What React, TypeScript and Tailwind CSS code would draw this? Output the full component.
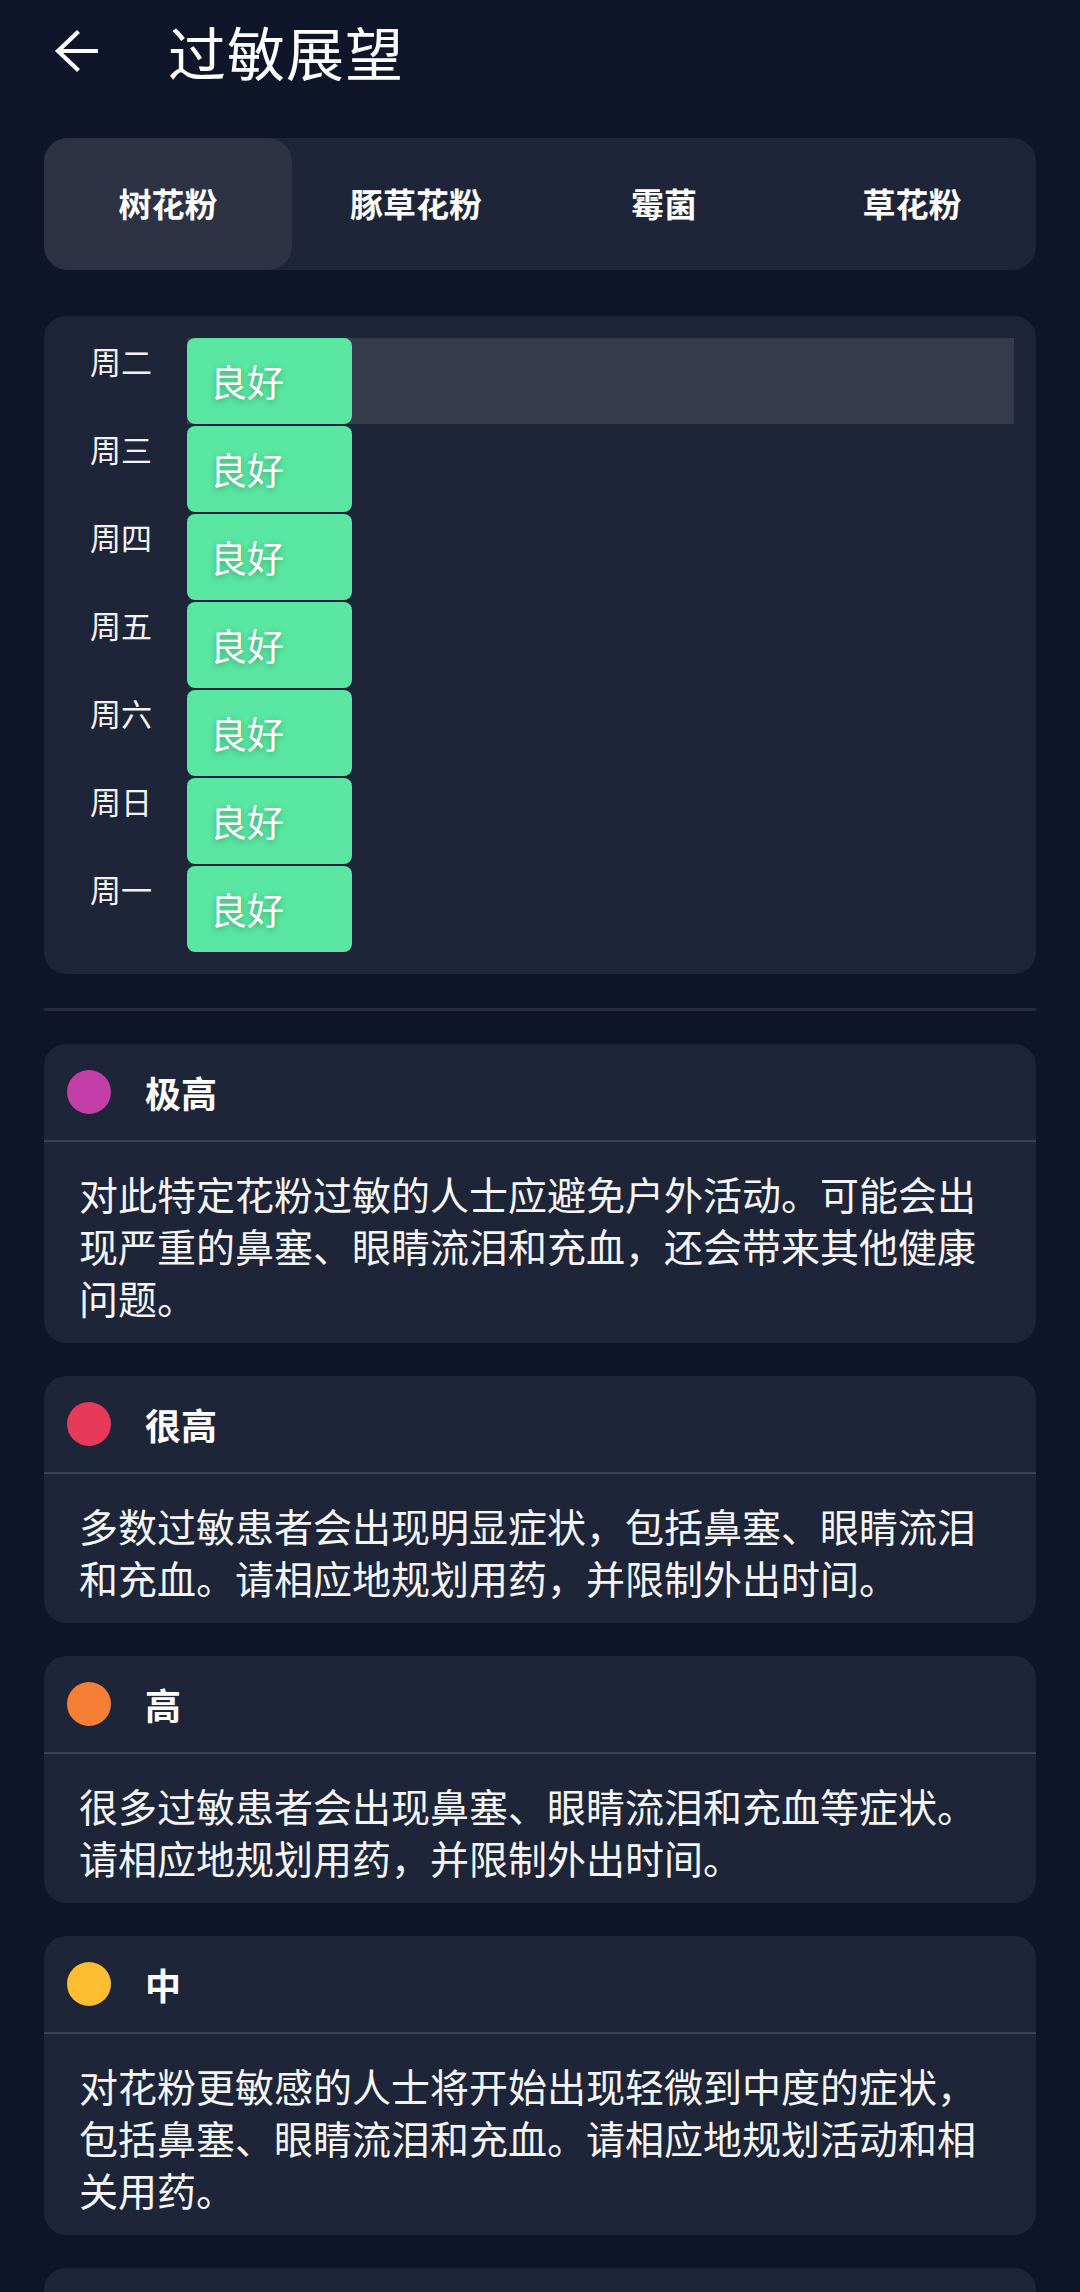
import React, { useState } from 'react';

const TABS = ['树花粉', '豚草花粉', '霉菌', '草花粉'];

const DAYS = ['周二', '周三', '周四', '周五', '周六', '周日', '周一'];

const LEVELS = [
  {
    name: '极高',
    dot: 'bg-[#c43ea9]',
    text: '对此特定花粉过敏的人士应避免户外活动。可能会出现严重的鼻塞、眼睛流泪和充血，还会带来其他健康问题。',
  },
  {
    name: '很高',
    dot: 'bg-[#e9395a]',
    text: '多数过敏患者会出现明显症状，包括鼻塞、眼睛流泪和充血。请相应地规划用药，并限制外出时间。',
  },
  {
    name: '高',
    dot: 'bg-[#f47f35]',
    text: '很多过敏患者会出现鼻塞、眼睛流泪和充血等症状。请相应地规划用药，并限制外出时间。',
  },
  {
    name: '中',
    dot: 'bg-[#fcbd30]',
    text: '对花粉更敏感的人士将开始出现轻微到中度的症状，包括鼻塞、眼睛流泪和充血。请相应地规划活动和相关用药。',
  },
];

function BackArrow() {
  return (
    <svg width="46" height="44" viewBox="0 0 46 44" fill="none" stroke="white" strokeWidth="4.2" strokeLinecap="butt">
      <path d="M44 22H4" />
      <path d="M24.5 2.5L4 22l20.5 19.5" />
    </svg>
  );
}

export default function App() {
  const [tab, setTab] = useState(0);
  const [day, setDay] = useState(0);

  return (
    <div
      className="w-[1080px] h-[2292px] overflow-hidden bg-[#10162a] text-white"
      style={{ fontFamily: '"Noto Sans CJK SC", "Noto Sans", sans-serif' }}
    >
      {/* header */}
      <div className="h-[102px] flex items-center pl-[54px]">
        <BackArrow />
        <h1 className="ml-[68px] text-[58px] leading-none font-normal tracking-[1px]">过敏展望</h1>
      </div>

      <div className="px-[44px]">
        {/* tabs */}
        <div className="mt-[36px] h-[132px] rounded-[24px] bg-[#1f2538] grid grid-cols-4">
          {TABS.map((t, i) => (
            <button
              key={t}
              onClick={() => setTab(i)}
              className={`h-full rounded-[24px] text-[33px] font-semibold flex items-center justify-center ${
                tab === i ? 'bg-[#2d3244]' : ''
              }`}
            >
              {t}
            </button>
          ))}
        </div>

        {/* forecast chart */}
        <div className="mt-[46px] rounded-[22px] bg-[#1f2538] p-[22px] flex flex-col gap-[2px]">
          {DAYS.map((d, i) => (
            <div key={d} className="flex h-[86px]" onClick={() => setDay(i)}>
              <div className="w-[121px] pl-[24px] pt-[7px] text-[31px] leading-[31px] text-[#f2f3f5]">{d}</div>
              <div className={`flex-1 h-full ${day === i ? 'bg-[#363b4b]' : ''}`}>
                <div className="w-[165px] h-full rounded-[8px] bg-[#58e6a0] flex items-center pl-[23px] pt-[2px] text-[37px] text-white [text-shadow:0_2px_6px_rgba(0,0,0,0.28)]">
                  良好
                </div>
              </div>
            </div>
          ))}
        </div>

        <div className="mt-[34px] h-[3px] bg-[#262c3e]" />

        {/* level legend */}
        <div className="mt-[33px] flex flex-col gap-[33px]">
          {LEVELS.map((l) => (
            <div key={l.name} className="rounded-[22px] bg-[#1f2538] overflow-hidden">
              <div className="h-[98px] flex items-center pl-[23px] border-b-2 border-[#3c4254]">
                <span className={`w-[44px] h-[44px] rounded-full ${l.dot}`} />
                <span className="ml-[34px] text-[36px] font-semibold leading-none">{l.name}</span>
              </div>
              <p className="px-[35px] pt-[25px] pb-[20px] text-[39px] leading-[52px] text-[#f4f5f7]">{l.text}</p>
            </div>
          ))}
          {/* next card, scrolled below the fold */}
          <div className="h-[240px] rounded-[22px] bg-[#1f2538]" />
        </div>
      </div>
    </div>
  );
}
